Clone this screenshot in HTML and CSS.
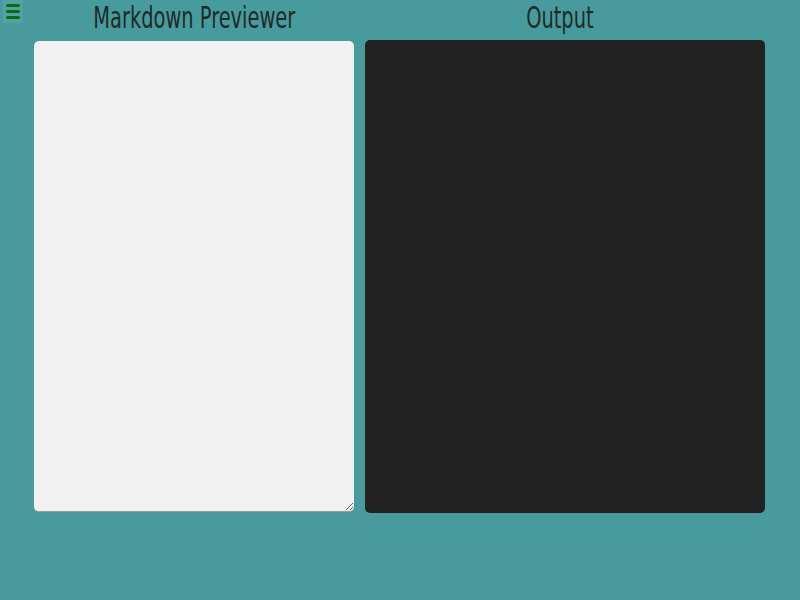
FILE: index.html
```html
<!DOCTYPE html>
<html>
<head>
<meta charset="utf-8">
<link rel="stylesheet" href="styles.css">
</head>
<body>
<button class="menu" aria-label="menu">
  <span class="bar"></span><span class="bar"></span><span class="bar"></span>
</button>
<main class="layout">
  <section class="col col-editor">
    <h1 class="title"><span class="title-text">Markdown Previewer</span></h1>
    <textarea class="editor"></textarea>
  </section>
  <section class="col col-output">
    <h1 class="title title-output"><span class="title-text">Output</span></h1>
    <div class="output"></div>
  </section>
</main>
</body>
</html>
```

FILE: styles.css
```css
html, body {
  margin: 0;
  padding: 0;
  background: #489b9c;
  height: 100%;
}
body {
  font-family: "DejaVu Sans Condensed", "DejaVu Sans", sans-serif;
}
.menu {
  position: absolute;
  left: 3px;
  top: 0;
  width: 20px;
  height: 23px;
  padding: 4px 3px;
  border: none;
  background: #52a2a3;
  display: flex;
  flex-direction: column;
  justify-content: space-between;
  box-sizing: border-box;
}
.bar {
  display: block;
  width: 14px;
  height: 3px;
  border-radius: 2px;
  background: #0b6b12;
}
.layout {
  display: flex;
  gap: 11px;
  padding-left: 34px;
}
.col {
  display: flex;
  flex-direction: column;
}
.col-editor { width: 320px; }
.col-output { width: 400px; }
.title {
  margin: 0;
  height: 40px;
  font-weight: normal;
  font-size: 30px;
  line-height: 35px;
  color: #1e2a2b;
  text-align: center;
  white-space: nowrap;
}
.title-text {
  display: inline-block;
  transform: scaleX(0.72);
}
.title-output { padding-right: 10px; }
.editor {
  margin-top: 1px;
  height: 471px;
  box-sizing: border-box;
  background: #f1f1f1;
  border: none;
  border-bottom: 1px solid #9a9a9a;
  border-radius: 5px;
  resize: vertical;
  padding: 4px;
}
.output {
  height: 473px;
  background: #222222;
  border-radius: 5px;
}
```
